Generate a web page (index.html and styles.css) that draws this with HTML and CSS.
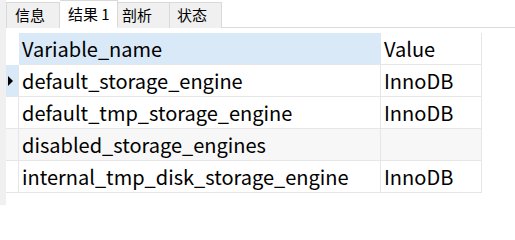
FILE: index.html
```html
<!DOCTYPE html>
<html>
<head>
<meta charset="utf-8">
<link rel="stylesheet" href="styles.css">
</head>
<body>
<div class="app">
  <div class="gutter"></div>
  <div class="main">
    <div class="tabbar">
      <div class="tab">信息</div>
      <div class="tab active">结果 1</div>
      <div class="tab">剖析</div>
      <div class="tab">状态</div>
    </div>
    <div class="grid">
      <div class="ind head"></div>
      <div class="cell name head-name">Variable_name</div>
      <div class="cell value head-value">Value</div>

      <div class="ind current"><span class="arrow"></span></div>
      <div class="cell name">default_storage_engine</div>
      <div class="cell value">InnoDB</div>

      <div class="ind"></div>
      <div class="cell name">default_tmp_storage_engine</div>
      <div class="cell value">InnoDB</div>

      <div class="ind alt"></div>
      <div class="cell name alt">disabled_storage_engines</div>
      <div class="cell value alt"></div>

      <div class="ind"></div>
      <div class="cell name">internal_tmp_disk_storage_engine</div>
      <div class="cell value">InnoDB</div>
    </div>
  </div>
</div>
</body>
</html>
```
FILE: styles.css
```css
html, body {
  margin: 0;
  padding: 0;
  background: #ffffff;
}
.app {
  display: flex;
  width: 515px;
  height: 205px;
  overflow: hidden;
  font-family: "Noto Sans CJK SC", "Noto Sans", sans-serif;
}
.gutter {
  width: 6px;
  background: #f0f0f0;
  flex: none;
}
.main {
  flex: 1;
  display: flex;
  flex-direction: column;
}
.tabbar {
  display: flex;
  align-items: flex-end;
  height: 27px;
  border-bottom: 1px solid #d9d9d9;
}
.tab {
  box-sizing: border-box;
  height: 26px;
  margin-bottom: -1px;
  width: 54px;
  padding-left: 8px;
  background: #f0f0f0;
  border: 1px solid #d9d9d9;
  border-bottom: none;
  border-left: none;
  font-size: 15px;
  line-height: 24px;
  color: #000;
}
.tab:first-child {
  border-left: 1px solid #d9d9d9;
}
.tab.active {
  height: 28px;
  width: 58px;
  background: #ffffff;
  border-bottom: 1px solid #ffffff;
  line-height: 24px;
  padding-top: 1px;
}
.tab:nth-child(3) { width: 52px; padding-left: 4px; }
.tab:nth-child(4) { width: 52px; padding-left: 7px; }
.grid {
  margin-top: 5px;
  display: grid;
  grid-template-columns: 13px 361px 102px;
  grid-auto-rows: 32px;
  width: 476px;
}
.ind, .cell {
  box-sizing: border-box;
  border-bottom: 1px solid #e6e6e6;
}
.ind {
  border-right: 1px solid #e6e6e6;
  display: flex;
  align-items: center;
  padding-left: 2px;
}
.ind.head {
  border-right: none;
  border-bottom: none;
}
.ind.current {
  background: #dae9f7;
}
.arrow {
  width: 0;
  height: 0;
  border-top: 5px solid transparent;
  border-bottom: 5px solid transparent;
  border-left: 5px solid #000;
}
.cell {
  font-size: 20px;
  line-height: 31px;
  color: #000;
  padding-left: 3px;
  white-space: nowrap;
  overflow: hidden;
}
.cell.value {
  border-left: 1px solid #e6e6e6;
  border-right: 1px solid #e6e6e6;
  padding-left: 3px;
}
.head-name {
  background: #dae9f7;
  border-bottom-color: #e6e6e6;
}
.head-value {
  background: #ffffff;
}
.alt {
  background: #f7f7f7;
}
```
